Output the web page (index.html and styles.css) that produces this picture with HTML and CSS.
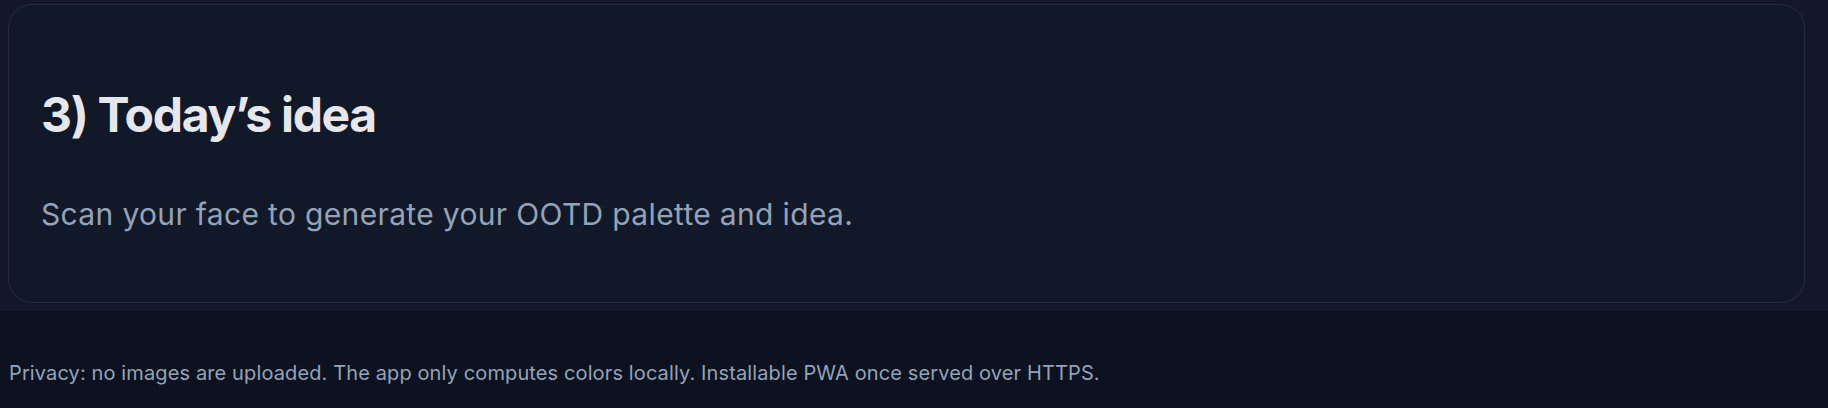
FILE: index.html
```html
<!DOCTYPE html>
<html lang="en">
<head>
<meta charset="utf-8">
<title>Today's idea</title>
<link rel="stylesheet" href="styles.css">
</head>
<body>
<main class="main">
  <section class="card">
    <h2 class="card-title">3) Today’s idea</h2>
    <p class="card-text">Scan your face to generate your OOTD palette and idea.</p>
  </section>
</main>
<footer class="footer">
  <p class="footer-text">Privacy: no images are uploaded. The app only computes colors locally. Installable PWA once served over HTTPS.</p>
</footer>
</body>
</html>
```

FILE: styles.css
```css
html, body {
  margin: 0;
  padding: 0;
}
body {
  background: #0c1220;
  font-family: Inter, "Noto Sans", sans-serif;
  width: 1828px;
  height: 408px;
  overflow: hidden;
}
.main {
  background: #121828;
  padding: 4px 23px 8px 8px;
}
.card {
  background: #111827;
  border: 1px solid #242b3a;
  border-radius: 24px;
  padding: 32px 32px 70px 32px;
}
.card-title {
  margin: 49px 0 0 0;
  font-size: 48px;
  line-height: 58px;
  font-weight: 700;
  color: #e5e7eb;
  letter-spacing: -1.3px;
}
.card-text {
  margin: 52px 0 0 0;
  font-size: 30px;
  line-height: 36px;
  color: #94a3b8;
  letter-spacing: 0.34px;
}
.footer {
  padding: 50px 8px 0 9px;
}
.footer-text {
  margin: 0;
  font-size: 20px;
  line-height: 24px;
  color: #94a3b8;
  letter-spacing: 0.12px;
}
```
